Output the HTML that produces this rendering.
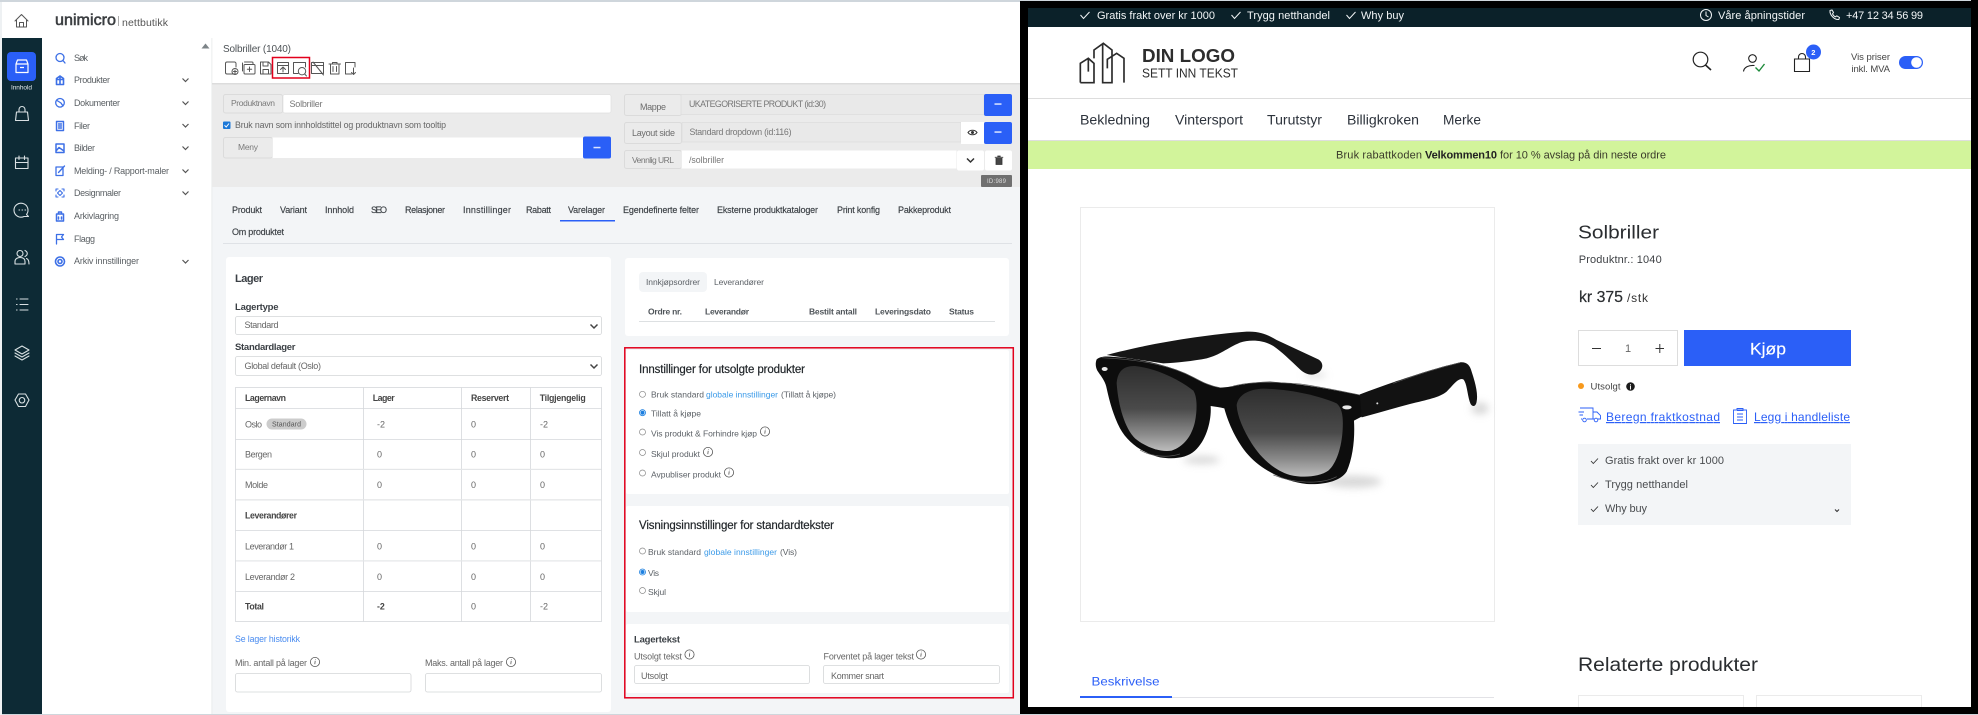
<!DOCTYPE html>
<html lang="no"><head><meta charset="utf-8"><title>Solbriller</title>
<style>
html,body{margin:0;padding:0;background:#fff;width:1978px;height:715px;overflow:hidden}
svg{display:block;font-family:"Liberation Sans",sans-serif}
.n{font-size:9px;fill:#5a5f63}
.t{font-size:9px;fill:#3a3f44;font-weight:500;stroke:#3a3f44;stroke-width:.15}
.g{font-size:9px;fill:#666}
.b{font-size:9.5px;fill:#3a3f44;font-weight:bold}
.d{font-size:8.5px;fill:#5d6267}
.l{font-size:8.5px;fill:#3b9ae8}
.h{font-size:11.5px;fill:#22272b;stroke:#22272b;stroke-width:.2}
.w{font-size:11px;fill:#f2f5f6}
.m{font-size:13.5px;fill:#2d333c}
.s{font-size:11px;fill:#444}
.u{stroke:#2b5ff7;stroke-width:.9;fill:none}
.a{font-size:12px;fill:#2b5ff7;text-decoration:underline}
.ic{fill:none;stroke:#d9e0e3;stroke-width:1.1;stroke-linecap:round;stroke-linejoin:round}
.bi{fill:none;stroke:#3c6fe6;stroke-width:1.3;stroke-linecap:round;stroke-linejoin:round}
.ti{fill:none;stroke:#555;stroke-width:1;stroke-linecap:round;stroke-linejoin:round}
.ch{fill:none;stroke:#555;stroke-width:1.2}
.ln{stroke:#d5d8db;stroke-width:.8}
.inp{fill:#fff;stroke:#d4d6d8;stroke-width:.8}
</style></head><body>
<svg width="1978" height="715" viewBox="0 0 1978 715" xmlns="http://www.w3.org/2000/svg">
<defs>
<linearGradient id="lens" x1="0" y1="0" x2="0" y2="1"><stop offset="0" stop-color="#2e2e2e"/><stop offset=".5" stop-color="#4a4a4a"/><stop offset=".8" stop-color="#8a8a8a"/><stop offset="1" stop-color="#bdbdbd"/></linearGradient>
<filter id="bl" x="-50%" y="-50%" width="200%" height="200%"><feGaussianBlur stdDeviation="12"/></filter>
<filter id="soft" filterUnits="userSpaceOnUse" x="0" y="0" width="1020" height="715"><feGaussianBlur stdDeviation=".3"/></filter>
<g id="inf" fill="none" stroke="#555" stroke-width=".8"><circle r="4.6"/><path d="M.2-1.2L-.2 2.2M.4-2.8v.5"/></g>
<path id="chv" d="M-3-1.5L0 1.5L3-1.5" class="ch"/>
<path id="ck" d="M-4.5 0L-1.5 3.5L4.5-3" fill="none" stroke="#f2f5f6" stroke-width="1"/>
<path id="ck2" d="M-3.5 0L-1.2 2.5L3.5-2.500" fill="none" stroke="#333" stroke-width=".9"/>
</defs>

<rect width="1978" height="715" fill="#000"/>
<!-- LEFT PANEL -->
<g filter="url(#soft)">
<rect x="0" y="0" width="1020" height="715" fill="#f3f5f7"/>
<rect x="0" y="0" width="1020" height="2" fill="#cfd6dc"/>
<rect x="0" y="714" width="1020" height="1" fill="#cfd6dc"/>
<rect x="2" y="2" width="1018" height="81" fill="#fff"/>
<rect x="0" y="2" width="2" height="713" fill="#eef1f3"/>
<rect x="2" y="2" width="210" height="712" fill="#fff"/>
<rect x="2" y="38" width="40" height="676" fill="#0d2c36"/>
<rect x="211.500" y="38" width=".8" height="676" fill="#e6e8ea"/>
<!-- home -->
<path d="M15 21L21.500 14.500L28 21M16.500 20V27H26.500V20M19.500 27V22.500H23.500V27" class="ti" stroke-width="1.1"/>
<!-- sidebar tile -->
<rect x="7" y="52" width="29" height="29" rx="4" fill="#2b5ff7"/>
<path d="M16 64V72.500H28V64ZM16 64L17.500 60H26.500L28 64M20 67.500H24" fill="none" stroke="#fff" stroke-width="1.2" stroke-linejoin="round"/>
<text x="11" y="89.500" font-size="6.500" fill="#e5eaec" textLength="21">Innhold</text>
<path class="ic" d="M16.500 112H27.500L28.500 120.500H15.500ZM19 112V109.500A3 3 0 0 1 25 109.500V112"/>
<path class="ic" d="M15.500 158H28V168.500H15.500ZM15.500 162.500H28M19 156V159.500M24.500 156V159.500"/>
<path class="ic" d="M28.500 216.500L26.500 214.500A7 7 0 1 0 24 216.500ZM19 210h.6M22 210h.6M25 210h.6"/>
<path class="ic" d="M15 264V261.500C15 258.500 18 257.500 20 257.500C22.500 257.500 25 258.500 25 261.500V264ZM20 250.500A3 3 0 1 1 20 256.500A3 3 0 1 1 20 250.500M25 250.500C28 252 28 255 25 256.500M26.500 258.500C28 259 29 260.500 29 264"/>
<path class="ic" d="M20 299H28M20 304.500H28M20 310H28M16.500 299h.6M16.500 304.500h.6M16.500 310h.6" stroke-width="1.5"/>
<path class="ic" d="M22 346L29 350L22 354L15 350ZM15 353L22 357L29 353M15 356L22 360L29 356"/>
<path class="ic" d="M18.500 394H25.500L29 400L25.500 406.500H18.500L15 400ZM22 397.500A2.700 2.700 0 1 1 22 403A2.700 2.700 0 1 1 22 397.500"/>

<!-- brand -->
<text x="55" y="25" font-size="15.500" fill="#3a3d40" stroke="#3a3d40" stroke-width=".55" textLength="61" lengthAdjust="spacingAndGlyphs">unimicro</text>
<rect x="118" y="16" width=".7" height="10" fill="#888"/>
<text x="122" y="26" font-size="10.500" fill="#555" textLength="46">nettbutikk</text>
<!-- nav -->
<g class="n">
<text x="74" y="61" textLength="14">Søk</text>
<text x="74" y="83" textLength="36">Produkter</text>
<text x="74" y="106" textLength="46">Dokumenter</text>
<text x="74" y="129" textLength="16">Filer</text>
<text x="74" y="151" textLength="21">Bilder</text>
<text x="74" y="174" textLength="95">Melding- / Rapport-maler</text>
<text x="74" y="196" textLength="47">Designmaler</text>
<text x="74" y="219" textLength="45">Arkivlagring</text>
<text x="74" y="242" textLength="21">Flagg</text>
<text x="74" y="264" textLength="65">Arkiv innstillinger</text>
</g>
<use href="#chv" x="185.500" y="80"/><use href="#chv" x="185.500" y="103"/><use href="#chv" x="185.500" y="125.500"/><use href="#chv" x="185.500" y="148"/><use href="#chv" x="185.500" y="171"/><use href="#chv" x="185.500" y="193"/><use href="#chv" x="185.500" y="261.500"/>
<g class="bi">
<path d="M60 53.500A4 4 0 1 1 60 61.500A4 4 0 1 1 60 53.500M63 60.500L65 63"/>
<path d="M56.500 78.500L60 76L63.500 78.500V84.500H56.500ZM60 76V84.500M56.500 79.500H63.500" stroke-width="1.6"/>
<path d="M60 98.500A4.300 4.300 0 1 1 60 107.100A4.300 4.300 0 1 1 60 98.500M57 100.500L61 103L63 106" />
<path d="M56.500 121.500H63.500V130.500H56.500ZM58.500 124H61.500M58.500 126H61.500M58.500 128H61.500" stroke-width="1.4"/>
<path d="M56 144H64V152.500H56ZM56 151L59 147.500L64 151" stroke-width="1.5"/>
<path d="M56 167H63V175.500H56ZM58.500 172.500L64.500 166" />
<path d="M56 191V189H58M62 189H64V191M56 195V197H58M62 197H64V195M60 190.500L62.500 193L60 195.500L57.500 193Z" stroke-width="1.1"/>
<path d="M56.500 214H63.500V221H56.500ZM58.500 214V212H61.500V214M58.500 217V219M61.500 217V219" stroke-width="1.5"/>
<path d="M56.500 244V234.500H63.500L61.500 237L63.500 239.500H56.500"/>
<path d="M60 257A4.500 4.500 0 1 1 60 266A4.500 4.500 0 1 1 60 257M60 259.500A2 2 0 1 1 60 263.500A2 2 0 1 1 60 259.500" stroke-width="1.6"/>
</g>
<path d="M201.500 48.500L205.500 43.500L209.500 48.500Z" fill="#7d8488"/>

<!-- toolbar -->
<text x="223" y="52" font-size="10" fill="#4e5357" textLength="68">Solbriller (1040)</text>
<g class="ti">
<path d="M236 74H227A1.500 1.500 0 0 1 225.500 72.500V63.500A1.500 1.500 0 0 1 227 62H234.500A1.500 1.500 0 0 1 236 63.500V67M235 68.500A3 3 0 1 1 235 74.500A3 3 0 1 1 235 68.500M235 70V73M233.500 71.500H236.500"/>
<path d="M244.500 62H252A1 1 0 0 1 253 63V64.500M245 64.500H254A1 1 0 0 1 255 65.500V73A1 1 0 0 1 254 74H245A1 1 0 0 1 244 73V65.500A1 1 0 0 1 245 64.500ZM242.500 71V63M249.500 67V71.500M247.300 69.200H251.700"/>
<path d="M260.500 62H268.500L271 64.500V74H260.500ZM263 62V66H268V62M263 74V69.500H268.500V74"/>
<path d="M277.500 62.500H288.500V73.500H277.500ZM277.500 65.500H288.500M283 72V67.500M280.500 69.500L283 67L285.500 69.500"/>
<path d="M293.500 73.500V62.500H305.500V67M298 73.500H294M302 67.500A3.700 3.700 0 1 1 302 74.900A3.700 3.700 0 1 1 302 67.500M304.700 74L306.500 76"/>
<path d="M311.500 62.500H323.500V73.500H311.500ZM311.500 65.500H323.500M313 62L323.500 75"/>
<path d="M329 64H340.500M332.500 64V62.500H337V64M330.500 64V74H339V64M333 66.500V71.500M336.500 66.500V71.500"/>
<path d="M345.500 62.500H355V67M345.500 62.500V74H351.500M353.500 68V74.500M351.500 72.500L353.500 74.500L355.500 72.500"/>
</g>
<rect x="272.500" y="57.500" width="37" height="20.500" fill="none" stroke="#e2001a" stroke-width="1.500"/>

<!-- gray section -->
<rect x="212" y="83" width="808" height="104" fill="#ebebeb"/>
<rect x="212" y="83" width="808" height="1.500" fill="#dcdcdc"/>
<rect x="223.500" y="94.500" width="59" height="18.500" rx="2" fill="#ebebeb" stroke="#dbdbdb"/>
<rect x="283" y="94.500" width="328" height="18.500" rx="2" fill="#fff" stroke="#e0e0e0" stroke-width=".7"/>
<text x="231" y="106" font-size="8.500" fill="#7a7a7a" textLength="44">Produktnavn</text>
<text x="289.500" y="107" font-size="9" fill="#777" textLength="33">Solbriller</text>
<rect x="223" y="121.500" width="7.500" height="7.500" rx="1" fill="#1f78d8"/>
<path d="M224.500 125.300L226.200 127L229 123.500" fill="none" stroke="#fff" stroke-width="1"/>
<text x="235" y="128" font-size="8.800" fill="#666" textLength="211">Bruk navn som innholdstittel og produktnavn som tooltip</text>
<rect x="223.500" y="137.500" width="49" height="20.500" rx="2" fill="#ebebeb" stroke="#dbdbdb"/>
<rect x="272.500" y="137.500" width="311" height="20.500" fill="#fff"/>
<text x="238" y="150" font-size="8.500" fill="#7a7a7a" textLength="20">Meny</text>
<rect x="583" y="136.500" width="28" height="22" rx="2" fill="#2b5ff7"/>
<rect x="593.500" y="146.800" width="7" height="1.500" fill="#dbe4ff"/>

<rect x="624.500" y="94.500" width="57" height="21" rx="2" fill="#ebebeb" stroke="#dbdbdb"/>
<rect x="681" y="94.500" width="303" height="20" fill="#e9e9e9" stroke="#dcdcdc" stroke-width=".7"/>
<text x="640" y="110" font-size="9" fill="#6d6d6d" textLength="26">Mappe</text>
<text x="689" y="107" font-size="8.800" fill="#777" textLength="137">UKATEGORISERTE PRODUKT (id:30)</text>
<rect x="984" y="94" width="28" height="22" rx="2" fill="#2b5ff7"/>
<rect x="994.500" y="103.300" width="7" height="1.500" fill="#dbe4ff"/>
<rect x="624.500" y="122.500" width="57" height="21" rx="2" fill="#ebebeb" stroke="#dbdbdb"/>
<rect x="682" y="122.500" width="279" height="19.500" fill="#e9e9e9" stroke="#dcdcdc" stroke-width=".7"/>
<text x="632" y="136" font-size="9" fill="#6d6d6d" textLength="43">Layout side</text>
<text x="689.500" y="135" font-size="8.800" fill="#777" textLength="102">Standard dropdown (id:116)</text>
<rect x="961" y="122" width="23" height="22" fill="#fff"/>
<path d="M968 132.500C970 129.500 975 129.500 977 132.500C975 135.500 970 135.500 968 132.500Z" fill="none" stroke="#333" stroke-width="1.100"/><circle cx="972.500" cy="132.500" r="1.500" fill="#333"/>
<rect x="984" y="122" width="28" height="22" rx="2" fill="#2b5ff7"/>
<rect x="994.500" y="131.300" width="7" height="1.500" fill="#dbe4ff"/>
<rect x="624.500" y="150.500" width="57" height="18" rx="2" fill="#ebebeb" stroke="#dbdbdb"/>
<rect x="681.500" y="150.500" width="275" height="18" fill="#fff"/>
<text x="632" y="163" font-size="8.500" fill="#777" textLength="42">Vennlig URL</text>
<text x="689" y="163" font-size="8.800" fill="#777" textLength="35">/solbriller</text>
<rect x="957" y="150.500" width="27" height="20" rx="2" fill="#fff"/><rect x="985" y="150.500" width="27" height="20" rx="2" fill="#fff"/>
<path d="M967 158.500L970.500 162L974 158.500" fill="none" stroke="#333" stroke-width="1.500"/>
<path d="M994.800 157.300H1003.200M997.800 157V156H1000.200V157M996 158V164.500H1002V158" fill="#444" stroke="#333" stroke-width=".8"/>
<rect x="981" y="175" width="31" height="12" rx="1" fill="#6f6f6f"/>
<text x="987" y="183" font-size="6" fill="#ddd" textLength="19">ID:989</text>

<!-- tabs -->
<g class="t">
<text x="232" y="213" textLength="30">Produkt</text><text x="280" y="213" textLength="27">Variant</text><text x="325" y="213" textLength="29">Innhold</text><text x="371" y="213" textLength="16">SEO</text><text x="405" y="213" textLength="40">Relasjoner</text><text x="463" y="213" textLength="48">Innstillinger</text><text x="526" y="213" textLength="25">Rabatt</text><text x="568" y="213" textLength="37">Varelager</text><text x="623" y="213" textLength="76">Egendefinerte felter</text><text x="717" y="213" textLength="101">Eksterne produktkataloger</text><text x="837" y="213" textLength="43">Print konfig</text><text x="898" y="213" textLength="53">Pakkeprodukt</text><text x="232" y="235" textLength="52">Om produktet</text>
</g>
<rect x="560" y="220" width="55" height="1.500" fill="#2b5ff7"/>
<rect x="223" y="243" width="789" height="1" fill="#dfe2e6"/>

<!-- Lager card -->
<rect x="226" y="257" width="385" height="455" rx="3" fill="#fff"/>
<text x="235" y="282" font-size="11" font-weight="bold" fill="#3a3f44" textLength="28">Lager</text>
<text x="235" y="310" class="b" textLength="43.500">Lagertype</text>
<rect x="235.500" y="316.500" width="366" height="18" rx="2" class="inp"/>
<text x="244.500" y="328" class="g" textLength="34">Standard</text>
<path d="M590.500 324.500L594 328L597.500 324.500" fill="none" stroke="#444" stroke-width="1.500"/>
<text x="235" y="350" class="b" textLength="60.500">Standardlager</text>
<rect x="235.500" y="356.500" width="366" height="19" rx="2" class="inp"/>
<text x="244.500" y="369" class="g" textLength="76.500">Global default (Oslo)</text>
<path d="M590.500 364.500L594 368L597.500 364.500" fill="none" stroke="#444" stroke-width="1.500"/>
<!-- table -->
<rect x="235.500" y="387.500" width="366" height="234" fill="#fff" stroke="#d5d8db" stroke-width=".8"/>
<g class="ln"><path d="M363.500 387.500V621.500M461.500 387.500V621.500M530.500 387.500V621.500M235.500 408.500H601.500M235.500 439.500H601.500M235.500 469.500H601.500M235.500 500H601.500M235.500 530.500H601.500M235.500 561H601.500M235.500 591.500H601.500"/></g>
<rect x="236" y="468.800" width="365" height="1.200" fill="#e4e6e8"/><rect x="236" y="499.200" width="365" height="1.200" fill="#e4e6e8"/><rect x="236" y="560.300" width="365" height="1.200" fill="#e4e6e8"/>
<g font-size="8.800" font-weight="bold" fill="#444">
<text x="245" y="401" textLength="41">Lagernavn</text><text x="372.700" y="401" textLength="22">Lager</text><text x="471" y="401" textLength="38">Reservert</text><text x="539.700" y="401" textLength="46">Tilgjengelig</text>
<text x="245" y="518.500" textLength="52">Leverandører</text><text x="245" y="609.500" textLength="19">Total</text><text x="377" y="609.500">-2</text>
</g>
<g class="g">
<text x="245" y="427.500" textLength="17">Oslo</text><text x="377" y="427.500">-2</text><text x="471" y="427.500">0</text><text x="540" y="427.500">-2</text>
<text x="245" y="457.500" textLength="27">Bergen</text><text x="377" y="457.500">0</text><text x="471" y="457.500">0</text><text x="540" y="457.500">0</text>
<text x="245" y="488" textLength="23">Molde</text><text x="377" y="488">0</text><text x="471" y="488">0</text><text x="540" y="488">0</text>
<text x="245" y="549.500" textLength="49">Leverandør 1</text><text x="377" y="549.500">0</text><text x="471" y="549.500">0</text><text x="540" y="549.500">0</text>
<text x="245" y="580" textLength="50">Leverandør 2</text><text x="377" y="580">0</text><text x="471" y="580">0</text><text x="540" y="580">0</text>
<text x="471" y="609.500">0</text><text x="540" y="609.500">-2</text>
</g>
<rect x="266.500" y="418.500" width="40" height="11" rx="5.500" fill="#cccccc"/>
<text x="272" y="426.500" font-size="7" fill="#555" textLength="29">Standard</text>
<text x="235" y="642" font-size="8.800" fill="#4a8cf0" textLength="65">Se lager historikk</text>
<text x="235" y="666" class="g" textLength="72">Min. antall på lager</text>
<text x="425" y="666" class="g" textLength="78">Maks. antall på lager</text>
<use href="#inf" x="315" y="662"/><use href="#inf" x="511" y="662"/>
<rect x="235.500" y="673.500" width="175.500" height="18.500" rx="2" class="inp"/>
<rect x="425.500" y="673.500" width="176" height="18.500" rx="2" class="inp"/>

<!-- Right cards -->
<rect x="625" y="258" width="384" height="78" rx="3" fill="#fff"/>
<rect x="639" y="272" width="68" height="20" rx="4" fill="#f3f5f7"/>
<text x="646" y="285" class="d" textLength="54">Innkjøpsordrer</text>
<text x="714" y="285" class="d" textLength="50">Leverandører</text>
<g font-size="8.500" font-weight="bold" fill="#50555a">
<text x="648" y="314.500" textLength="34">Ordre nr.</text><text x="705" y="314.500" textLength="44">Leverandør</text><text x="809" y="314.500" textLength="48">Bestilt antall</text><text x="875" y="314.500" textLength="56">Leveringsdato</text><text x="949" y="314.500" textLength="25">Status</text>
</g>
<rect x="639" y="321" width="356" height=".8" fill="#d5d8db"/>

<rect x="626" y="350" width="383" height="144" rx="2" fill="#fff"/>
<rect x="626" y="506" width="383" height="106" rx="2" fill="#fff"/>
<rect x="626" y="624" width="383" height="69" rx="2" fill="#fff"/>
<text x="639" y="373" class="h" textLength="166">Innstillinger for utsolgte produkter</text>
<g fill="#fff" stroke="#8a8a8a" stroke-width=".7">
<circle cx="642.500" cy="394.300" r="3"/><circle cx="642.500" cy="432" r="3"/><circle cx="642.500" cy="452.500" r="3"/><circle cx="642.500" cy="473" r="3"/><circle cx="642.500" cy="551" r="3"/><circle cx="642.500" cy="590.500" r="3"/>
</g>
<g fill="#fff" stroke="#1a7fe0" stroke-width=".8"><circle cx="642.500" cy="412.700" r="3"/><circle cx="642.500" cy="572" r="3"/></g>
<circle cx="642.500" cy="412.700" r="2" fill="#1a7fe0"/><circle cx="642.500" cy="572" r="2" fill="#1a7fe0"/>
<g class="d">
<text x="651" y="397.500" textLength="53">Bruk standard</text><text x="781" y="397.500" textLength="55">(Tillatt å kjøpe)</text>
<text x="651" y="416.700" textLength="50">Tillatt å kjøpe</text>
<text x="651" y="436.500" textLength="106">Vis produkt &amp; Forhindre kjøp</text>
<text x="651" y="457" textLength="49">Skjul produkt</text>
<text x="651" y="477.500" textLength="70">Avpubliser produkt</text>
<text x="648" y="555" textLength="53">Bruk standard</text><text x="780" y="555" textLength="17">(Vis)</text>
<text x="648" y="576" textLength="11">Vis</text>
<text x="648" y="595" textLength="18">Skjul</text>
</g>
<text x="706" y="397.500" class="l" textLength="72">globale innstillinger</text>
<text x="704" y="555" class="l" textLength="73">globale innstillinger</text>
<use href="#inf" x="765" y="431.500"/><use href="#inf" x="708" y="452"/><use href="#inf" x="729" y="472.500"/>
<text x="639" y="529" class="h" textLength="195">Visningsinnstillinger for standardtekster</text>
<text x="634" y="642.700" font-size="9.500" font-weight="bold" fill="#3a3f44" textLength="46">Lagertekst</text>
<text x="634" y="659.500" class="g" textLength="48">Utsolgt tekst</text>
<text x="823.500" y="659.500" class="g" textLength="90.500">Forventet på lager tekst</text>
<use href="#inf" x="689.500" y="654.500"/><use href="#inf" x="921" y="654.500"/>
<rect x="634.500" y="665.500" width="175" height="18" rx="2" class="inp"/>
<rect x="823.500" y="665.500" width="176" height="18" rx="2" class="inp"/>
<text x="641" y="679" class="g" fill="#777" textLength="27">Utsolgt</text>
<text x="831" y="679" class="g" textLength="53">Kommer snart</text>
<rect x="624.800" y="347.800" width="388.500" height="350" fill="none" stroke="#e2001a" stroke-width="1.500"/>
</g>

<!-- STORE -->
<rect x="1028" y="8" width="943" height="699" fill="#fff"/>
<rect x="1020" y="0" width="958" height="1" fill="#cfd6dc"/>
<rect x="1028" y="8" width="943" height="19" fill="#0b2129"/>
<use href="#ck" x="1085" y="15"/><use href="#ck" x="1236" y="15"/><use href="#ck" x="1351" y="15"/>
<text x="1097" y="19" class="w" textLength="118">Gratis frakt over kr 1000</text>
<text x="1247" y="19" class="w" textLength="83">Trygg netthandel</text>
<text x="1361" y="19" class="w" textLength="43">Why buy</text>
<g fill="none" stroke="#f2f5f6" stroke-width="1"><circle cx="1706" cy="15" r="5.500"/><path d="M1706 11.500V15.500L1708.500 17"/>
<path d="M1830 10.500L1832 10L1833.500 12.500L1832.500 13.800C1833 15 1834.200 16.300 1835.500 16.800L1836.800 15.800L1839.500 17.500L1838.800 19.500C1834.500 20 1829.500 15 1830 10.500Z"/></g>
<text x="1718" y="19" class="w" textLength="87">Våre åpningstider</text>
<text x="1846" y="19" class="w" textLength="77">+47 12 34 56 99</text>

<!-- logo -->
<g transform="translate(1020 0) scale(.3333)" fill="none" stroke="#2b2b2b" stroke-width="5">
<path d="M181 248V190L205 175L222 190V248H181M205 175V215M222 175V150L250 130L276 150V248H248V132M262 205V178L290 160L312 175V248"/>
</g>
<text x="1142" y="62" font-size="18.500" font-weight="bold" fill="#2d2d2d" textLength="93" lengthAdjust="spacingAndGlyphs">DIN LOGO</text>
<text x="1142" y="77.500" font-size="12.500" fill="#2d2d2d" textLength="96" lengthAdjust="spacingAndGlyphs">SETT INN TEKST</text>
<!-- header icons -->
<circle cx="1700.500" cy="59.500" r="7.300" fill="none" stroke="#222" stroke-width="1.200"/><path d="M1705.500 65L1711 70" stroke="#222" stroke-width="1.600"/>
<circle cx="1752.500" cy="58.500" r="3.800" fill="none" stroke="#222" stroke-width="1.100"/><path d="M1743.500 71.500C1744 67 1749 65 1754.500 65.500" fill="none" stroke="#222" stroke-width="1.100"/><path d="M1755.500 67.500L1759 71L1764.500 64" fill="none" stroke="#1d8a3a" stroke-width="1.400"/>
<path d="M1794.500 59H1809.500V71.500H1794.500ZM1798.500 59V57A3.500 3.500 0 0 1 1805.500 57V59" fill="none" stroke="#222" stroke-width="1.100"/>
<circle cx="1813.500" cy="52" r="7.500" fill="#2b5ff7"/><text x="1811.300" y="55" font-size="7.500" font-weight="bold" fill="#fff">2</text>
<text x="1851" y="60" font-size="9.500" fill="#444" textLength="39">Vis priser</text>
<text x="1851.500" y="72" font-size="9.500" fill="#444" textLength="38.500">inkl. MVA</text>
<rect x="1899" y="56" width="24" height="13" rx="6.500" fill="#2b5ff7"/><circle cx="1916.500" cy="62.500" r="5.300" fill="#fff"/>
<rect x="1028" y="98" width="943" height="1" fill="#ddd"/>
<g class="m"><text x="1080" y="124.500" textLength="70" lengthAdjust="spacingAndGlyphs">Bekledning</text><text x="1175" y="124.500" textLength="68" lengthAdjust="spacingAndGlyphs">Vintersport</text><text x="1267" y="124.500" textLength="55" lengthAdjust="spacingAndGlyphs">Turutstyr</text><text x="1347" y="124.500" textLength="72" lengthAdjust="spacingAndGlyphs">Billigkroken</text><text x="1443" y="124.500" textLength="38" lengthAdjust="spacingAndGlyphs">Merke</text></g>
<rect x="1028" y="140" width="943" height="1" fill="#dedede"/>
<rect x="1028" y="141" width="943" height="28" fill="#d2f49b"/>
<text x="1336" y="158.500" font-size="11" fill="#3a3a2a" textLength="86">Bruk rabattkoden</text>
<text x="1425" y="158.500" font-size="11" fill="#222" font-weight="bold" textLength="72">Velkommen10</text>
<text x="1500" y="158.500" font-size="11" fill="#3a3a2a" textLength="166">for 10 % avslag på din neste ordre</text>

<!-- image box -->
<rect x="1080.500" y="207.500" width="414" height="414" fill="#fff" stroke="#ebebeb"/>
<g transform="translate(1060 300) scale(.3333)">
<g fill="#c8c8c8" filter="url(#bl)" opacity=".7"><ellipse cx="425" cy="480" rx="55" ry="12"/><ellipse cx="880" cy="545" rx="85" ry="18"/><ellipse cx="1260" cy="325" rx="26" ry="18"/><ellipse cx="765" cy="225" rx="35" ry="7"/></g>
<path d="M140 165C250 135 420 105 560 95C600 93 625 105 650 120L775 178C792 188 790 208 775 218C755 230 735 222 720 208C690 180 665 155 640 138C610 120 570 118 540 128C500 145 480 165 440 175C400 183 350 188 310 190Z" fill="#161616"/>
<path d="M895 285C1000 245 1120 205 1200 187C1220 185 1230 195 1235 215C1245 245 1255 280 1250 305C1248 320 1238 322 1232 312C1222 290 1222 250 1210 238C1195 232 1180 255 1160 275C1140 292 1100 300 1050 312C1000 325 950 340 905 352Z" fill="#121212"/>
<path d="M110 178C125 165 150 170 180 172C260 180 340 200 400 232C430 248 450 258 480 263C520 262 570 245 630 245C720 250 820 270 900 285L905 350L882 362C885 410 880 470 860 515C840 545 790 555 740 552C680 545 610 515 565 465C530 425 505 370 493 325C480 322 465 320 452 318C455 360 440 420 405 452C380 475 340 478 300 472C250 460 205 430 180 385C160 345 150 310 140 265C135 240 120 225 112 212C106 200 106 188 110 178Z" fill="#0d0d0d"/>
<path d="M170 250C172 215 190 197 225 198C290 205 360 240 400 272C412 290 412 330 405 365C395 410 370 440 335 452C300 458 255 440 225 415C195 385 175 320 170 250Z" fill="url(#lens)"/>
<path d="M530 315C535 285 565 268 610 266C690 268 770 285 830 310C848 325 850 355 848 390C845 440 830 490 805 512C780 530 730 535 690 525C640 510 600 470 575 430C550 390 532 350 530 315Z" fill="url(#lens)"/>
<ellipse cx="134" cy="207" rx="9" ry="6" fill="#e8e8e8"/><ellipse cx="861" cy="322" rx="14" ry="6" fill="#e8e8e8"/><circle cx="952" cy="310" r="3" fill="#ddd"/>
<path d="M125 173C260 180 340 200 400 232C430 248 450 258 480 263M520 258C570 245 630 245 720 252C780 260 850 275 900 285M1000 250C1080 220 1150 200 1200 188M240 450C270 468 320 475 360 462M640 525C700 550 780 555 830 530" fill="none" stroke="#5a5a5a" stroke-width="2"/>
</g>

<!-- product -->
<text x="1578" y="238.500" font-size="18.500" fill="#2a2d30" textLength="81" lengthAdjust="spacingAndGlyphs">Solbriller</text>
<text x="1578.700" y="263" font-size="11" fill="#3f4246" textLength="83">Produktnr.: 1040</text>
<text x="1579" y="302" font-size="15.500" fill="#2a2d30" textLength="44" lengthAdjust="spacingAndGlyphs" stroke="#2a2d30" stroke-width=".2">kr 375</text>
<text x="1627" y="302" font-size="12" fill="#333" textLength="21">/stk</text>
<rect x="1578.500" y="330.500" width="99" height="35" fill="#fff" stroke="#ddd"/>
<path d="M1592 348.500H1601M1655.500 348.500H1664M1659.800 344V353" stroke="#333" stroke-width="1"/>
<text x="1625" y="352" font-size="11" fill="#666">1</text>
<rect x="1684" y="330" width="167" height="36" fill="#2b5ff7"/>
<text x="1750" y="354.500" font-size="17" fill="#fff" textLength="36" lengthAdjust="spacingAndGlyphs" stroke="#fff" stroke-width=".15">Kjøp</text>
<circle cx="1581" cy="386" r="3" fill="#f7991c"/>
<text x="1590.500" y="389.500" font-size="9.500" fill="#444" textLength="30">Utsolgt</text>
<circle cx="1630.500" cy="386.500" r="4.300" fill="#1b1b1b"/><text x="1629.500" y="389.500" font-size="7" font-weight="bold" fill="#fff">i</text>
<g class="u">
<path d="M1580 408H1593V419H1587M1582 419H1581M1593 412H1597L1600.500 415.500V419H1598M1594 419H1593M1578.500 412H1584M1579.500 415H1583"/><circle cx="1584.500" cy="420" r="1.800"/><circle cx="1596" cy="420" r="1.800"/>
<path d="M1733.500 410H1746.500V423.500H1733.500ZM1737 410V408.500H1743V410.500H1737M1737 414H1743M1737 417H1743M1737 420H1743"/>
</g>
<text x="1606" y="421" class="a" textLength="114">Beregn fraktkostnad</text>
<text x="1754" y="421" class="a" textLength="96">Legg i handleliste</text>
<rect x="1578" y="444" width="273" height="81" fill="#f3f5f7"/>
<use href="#ck2" x="1594.500" y="461"/><use href="#ck2" x="1594.500" y="485"/><use href="#ck2" x="1594.500" y="509"/>
<g font-size="11" fill="#4a4d50"><text x="1605" y="464" textLength="119">Gratis frakt over kr 1000</text><text x="1605" y="488" textLength="83">Trygg netthandel</text><text x="1605" y="512" textLength="42">Why buy</text></g>
<path d="M1835 509.500L1837 511.500L1839 509.500" fill="none" stroke="#333" stroke-width="1.100"/>

<text x="1578" y="671" font-size="19" fill="#2a2d30" textLength="180" lengthAdjust="spacingAndGlyphs">Relaterte produkter</text>
<text x="1091.500" y="685.500" font-size="12" fill="#2b5ff7" textLength="68" lengthAdjust="spacingAndGlyphs">Beskrivelse</text>
<rect x="1080" y="697" width="414" height="1" fill="#e2e2e6"/>
<rect x="1080" y="696" width="92" height="2" fill="#2b5ff7"/>
<rect x="1578.500" y="695.500" width="165" height="13" fill="none" stroke="#ebebeb"/>
<rect x="1756.500" y="695.500" width="165" height="13" fill="none" stroke="#ebebeb"/>
<rect x="1020" y="707" width="958" height="7" fill="#000"/>
<rect x="1971" y="0" width="7" height="714" fill="#000"/>
<rect x="1020" y="1" width="8" height="713" fill="#000"/>
<rect x="1020" y="714" width="958" height="1" fill="#cfd6dc"/>
</svg>
</body></html>
